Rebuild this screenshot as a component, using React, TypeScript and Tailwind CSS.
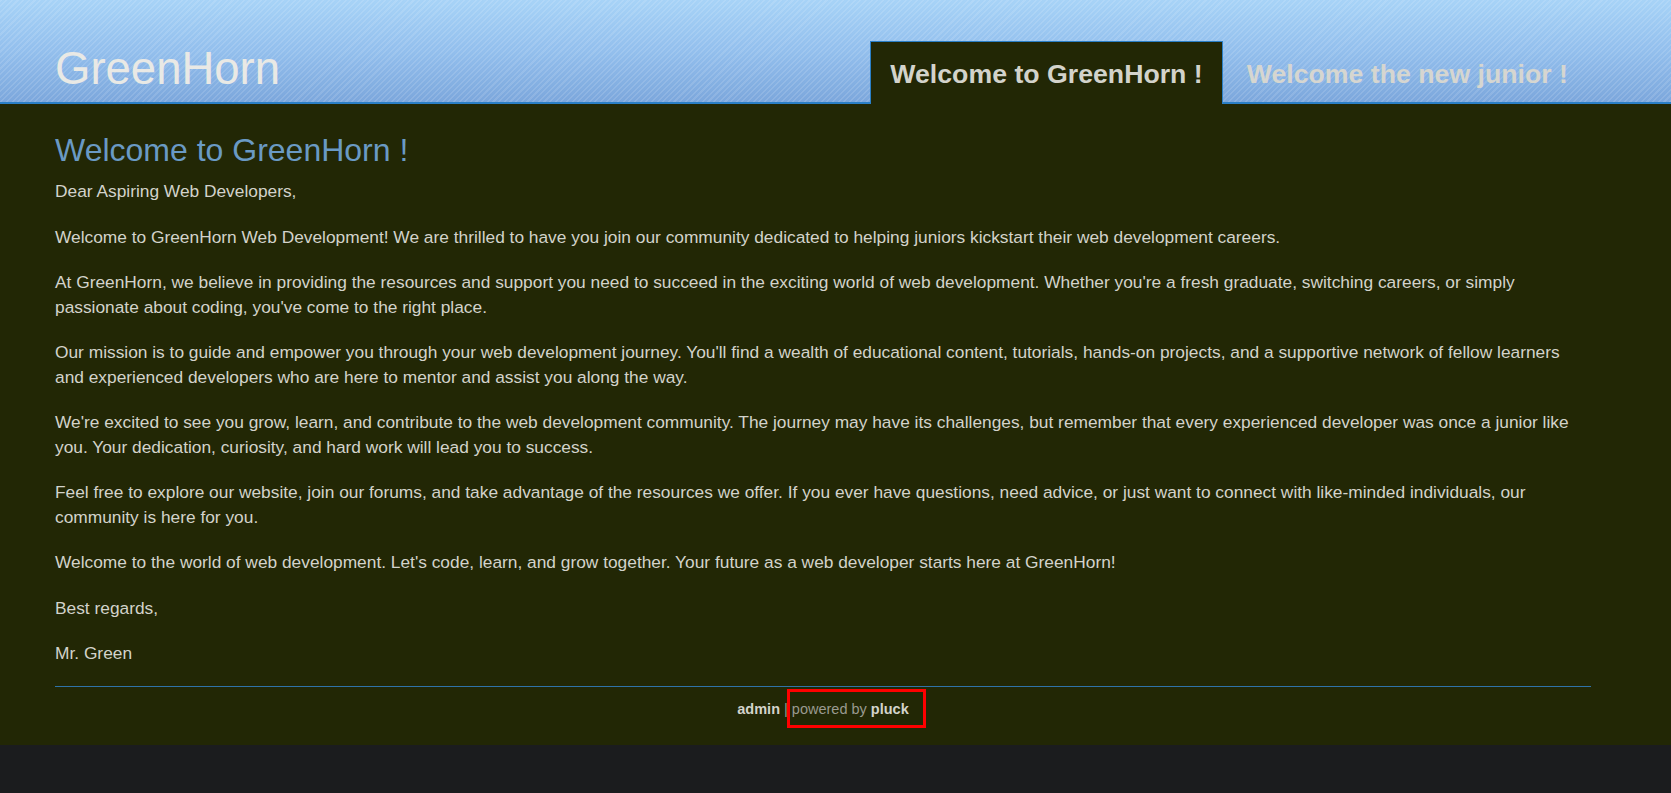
import React from "react";

const paragraphs: string[] = [
  "Dear Aspiring Web Developers,",
  "Welcome to GreenHorn Web Development! We are thrilled to have you join our community dedicated to helping juniors kickstart their web development careers.",
  "At GreenHorn, we believe in providing the resources and support you need to succeed in the exciting world of web development. Whether you're a fresh graduate, switching careers, or simply passionate about coding, you've come to the right place.",
  "Our mission is to guide and empower you through your web development journey. You'll find a wealth of educational content, tutorials, hands-on projects, and a supportive network of fellow learners and experienced developers who are here to mentor and assist you along the way.",
  "We're excited to see you grow, learn, and contribute to the web development community. The journey may have its challenges, but remember that every experienced developer was once a junior like you. Your dedication, curiosity, and hard work will lead you to success.",
  "Feel free to explore our website, join our forums, and take advantage of the resources we offer. If you ever have questions, need advice, or just want to connect with like-minded individuals, our community is here for you.",
  "Welcome to the world of web development. Let's code, learn, and grow together. Your future as a web developer starts here at GreenHorn!",
  "Best regards,",
  "Mr. Green",
];

export default function App() {
  return (
    <div className="min-h-[793px] bg-[#1b1c1e] font-['Liberation_Sans',Arial,sans-serif]">
      <div className="bg-[#222705]">
        <header className="h-[104px] border-b-2 border-[#2b7fc6] bg-[repeating-linear-gradient(135deg,rgba(255,255,255,0.12)_0px,rgba(255,255,255,0.12)_1.5px,rgba(255,255,255,0)_1.5px,rgba(255,255,255,0)_4px),linear-gradient(180deg,#a7d3f7_0%,#93bfed_50%,#7ca7dc_100%)]">
          <div className="ml-[55px] flex h-full w-[1536px] items-start justify-between">
            <div className="mt-[43px] text-[45.5px] leading-[52px] text-[#e9e9e5]">GreenHorn</div>
            <nav className="mr-[3px] flex h-full items-end gap-[4px]">
              <div className="mb-[-2px] h-[63px] border-x border-t border-[#2b7fc6] bg-[#222705] px-[19px] pt-[17px] text-[26.7px] font-bold leading-[30.5px] text-[#d3d3cb]">
                Welcome to GreenHorn !
              </div>
              <div className="mb-[-2px] h-[63px] px-[20px] pt-[18px] text-[26.7px] font-bold leading-[30.5px] text-[#d6d6d0]">
                Welcome the new junior !
              </div>
            </nav>
          </div>
        </header>
        <main className="ml-[55px] w-[1536px] pt-[28px]">
          <h1 className="mb-[10px] text-[32px] font-normal leading-[37px] text-[#6a9ac4]">
            Welcome to GreenHorn !
          </h1>
          {paragraphs.map((p, i) => (
            <p
              key={i}
              className={`text-[17.33px] leading-[24.5px] text-[#d3d3cb] ${i === paragraphs.length - 1 ? "mb-0" : "mb-[21px]"}`}
            >
              {p}
            </p>
          ))}
          <footer className="mt-[20px] border-t border-[#2f73a8] pb-[26px] pt-[12px] text-center text-[14.5px] leading-[20px]">
            <span className="font-bold text-[#d3d3cb]">admin</span>
            <span className="text-[#9a9a90]"> | </span>
            <span className="relative">
              <span className="text-[#9a9a90]">powered by </span>
              <span className="font-bold text-[#d3d3cb]">pluck</span>
              <span className="pointer-events-none absolute -bottom-[11px] -left-[5px] -right-[17px] -top-[12px] border-[3px] border-[#ff0000]" />
            </span>
          </footer>
        </main>
      </div>
    </div>
  );
}
